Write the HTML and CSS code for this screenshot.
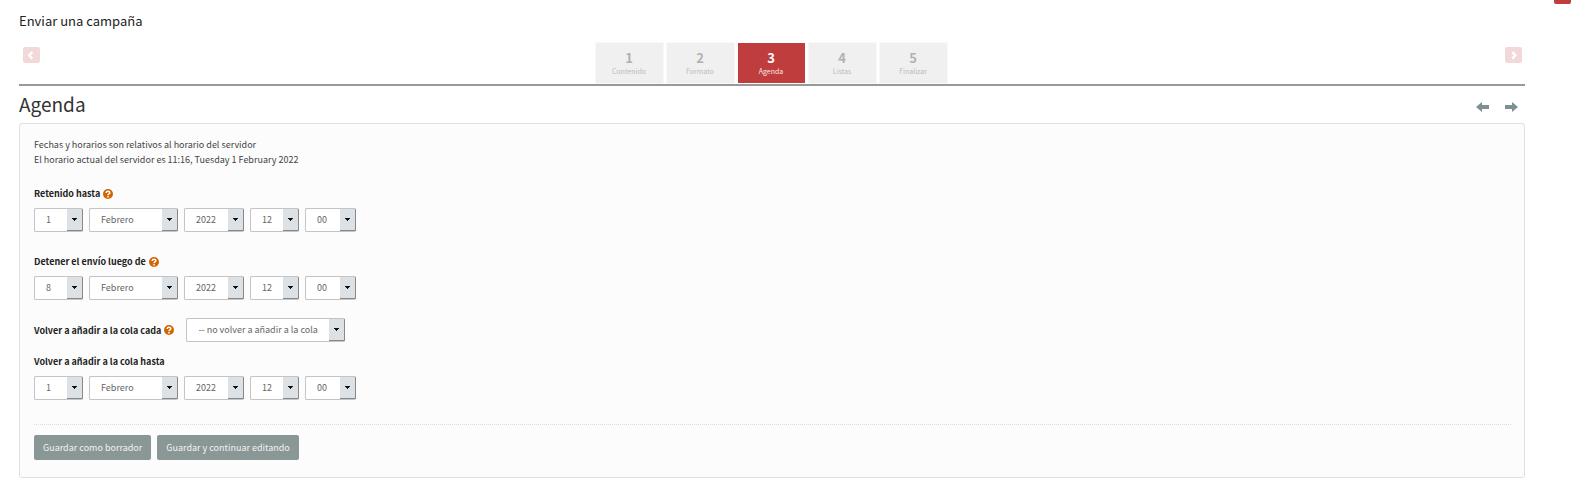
FILE: index.html
```html
<!DOCTYPE html>
<html lang="es">
<head>
<meta charset="utf-8">
<title>Enviar una campaña</title>
<link rel="stylesheet" href="styles.css">
</head>
<body>
<button class="menu-toggle" type="button" aria-label="Menu"></button>
<main class="page">
  <h1 class="page-title">Enviar una campaña</h1>
  <nav class="wizard">
    <button class="pager" type="button" aria-label="Anterior"><svg viewBox="0 0 17 16"><path d="M9.300 5 6.300 8.300l3 3.300"/></svg></button>
    <div class="tabs">
      <a class="tab" href="#1"><b>1</b><span>Contenido</span></a>
      <a class="tab" href="#2"><b>2</b><span>Formato</span></a>
      <a class="tab active" href="#3"><b>3</b><span>Agenda</span></a>
      <a class="tab" href="#4"><b>4</b><span>Listas</span></a>
      <a class="tab" href="#5"><b>5</b><span>Finalizar</span></a>
    </div>
    <button class="pager" type="button" aria-label="Siguiente"><svg viewBox="0 0 17 16"><path d="M7.300 5l3 3.300-3 3.300"/></svg></button>
  </nav>
  <header class="section-head">
    <h2>Agenda</h2>
    <div class="arrows">
      <a href="#2" aria-label="Anterior"><svg viewBox="0 0 13 10"><path d="M0 5 6 0v3h7v4H6v3z"/></svg></a>
      <a href="#4" aria-label="Siguiente"><svg viewBox="0 0 13 10"><path d="M13 5 7 0v3H0v4h7v3z"/></svg></a>
    </div>
  </header>
  <form class="panel">
    <p class="note">Fechas y horarios son relativos al horario del servidor<br>El horario actual del servidor es 11:16, Tuesday 1 February 2022</p>
    <div class="field">
      <div class="label-row"><label for="d1">Retenido hasta</label><a class="help" href="#h1" aria-label="Ayuda"><svg viewBox="0 0 10 10"><circle cx="5" cy="5" r="5"/><path d="M3.200 3.900C3.200 1.700 6.800 1.700 6.800 3.800 6.800 5 5 4.900 5 6.200M5 7.100v1.300"/></svg></a></div>
      <div class="selects">
        <select class="w-day" id="d1" aria-label="Día"><option>1</option></select>
        <select class="w-month" aria-label="Mes"><option>Febrero</option></select>
        <select class="w-year" aria-label="Año"><option>2022</option></select>
        <select class="w-day" aria-label="Hora"><option>12</option></select>
        <select class="w-min" aria-label="Minuto"><option>00</option></select>
      </div>
    </div>
    <div class="field">
      <div class="label-row"><label for="d2">Detener el envío luego de</label><a class="help" href="#h2" aria-label="Ayuda"><svg viewBox="0 0 10 10"><circle cx="5" cy="5" r="5"/><path d="M3.200 3.900C3.200 1.700 6.800 1.700 6.800 3.800 6.800 5 5 4.900 5 6.200M5 7.100v1.300"/></svg></a></div>
      <div class="selects">
        <select class="w-day" id="d2" aria-label="Día"><option>8</option></select>
        <select class="w-month" aria-label="Mes"><option>Febrero</option></select>
        <select class="w-year" aria-label="Año"><option>2022</option></select>
        <select class="w-day" aria-label="Hora"><option>12</option></select>
        <select class="w-min" aria-label="Minuto"><option>00</option></select>
      </div>
    </div>
    <div class="field-inline">
      <div class="label-row"><label for="rq">Volver a añadir a la cola cada</label><a class="help" href="#h3" aria-label="Ayuda"><svg viewBox="0 0 10 10"><circle cx="5" cy="5" r="5"/><path d="M3.200 3.900C3.200 1.700 6.800 1.700 6.800 3.800 6.800 5 5 4.900 5 6.200M5 7.100v1.300"/></svg></a></div>
      <select class="w-queue" id="rq"><option>-- no volver a añadir a la cola</option></select>
    </div>
    <div class="field-until">
      <div class="label-row"><label for="d3">Volver a añadir a la cola hasta</label></div>
      <div class="selects">
        <select class="w-day" id="d3" aria-label="Día"><option>1</option></select>
        <select class="w-month" aria-label="Mes"><option>Febrero</option></select>
        <select class="w-year" aria-label="Año"><option>2022</option></select>
        <select class="w-day" aria-label="Hora"><option>12</option></select>
        <select class="w-min" aria-label="Minuto"><option>00</option></select>
      </div>
    </div>
    <div class="actions">
      <button class="save" type="button">Guardar como borrador</button>
      <button class="save" type="button">Guardar y continuar editando</button>
    </div>
  </form>
</main>
</body>
</html>
```
FILE: styles.css
```css
* { box-sizing: border-box; }
body {
  margin: 0;
  background: #fff;
  color: #444;
  font: 9px/15px "Noto Sans CJK SC", sans-serif;
}
h1, h2, p { margin: 0; font-weight: 400; }
a { text-decoration: none; color: inherit; }
button { font: inherit; border: 0; padding: 0; }
svg { display: block; }

.menu-toggle {
  position: absolute;
  top: 0;
  right: 3px;
  width: 17px;
  height: 4px;
  background: #bf3d3d;
  border-radius: 0 0 2px 2px;
}
.page { margin: 0 49px 0 19px; padding-top: 10px; }
.page-title { font-size: 13px; line-height: 22px; color: #222; }

.wizard {
  display: flex;
  justify-content: space-between;
  margin-top: 10px;
  padding: 0 3px 0 4px;
  border-bottom: 2px solid #999;
}
.pager {
  width: 17px;
  height: 16px;
  margin-top: 5px;
  background: #f2d8d9;
  border-radius: 2px;
}
.pager path { fill: none; stroke: #fff; stroke-width: 2.4; }
.tabs { display: flex; gap: 2px; margin-right: 3px; }
.tab {
  width: 69px;
  height: 42px;
  padding-top: 8px;
  border: 1px solid #f8f8f8;
  background: #f0f0f0;
  background-clip: padding-box;
  color: #b0b0b0;
  text-align: center;
}
.tab b { display: block; font-size: 13px; line-height: 14px; }
.tab span { display: block; color: #bbb; font-size: 7px; line-height: 12px; }
.tab.active { background-color: #bf3d3d; border-color: #fff; color: #fff; }
.tab.active span { color: #fae6e6; }

.section-head {
  display: flex;
  justify-content: space-between;
  align-items: center;
  height: 37px;
  padding: 0 7px 2px 0;
}
.section-head h2 { font-size: 19px; line-height: 35px; color: #333; }
.arrows { display: flex; gap: 16px; padding-top: 6px; }
.arrows svg { width: 13px; height: 10px; fill: #7f9093; }

.panel {
  padding: 13px 13px 17px 14px;
  border: 1px solid #e0e0e0;
  border-radius: 3px;
  background: #fcfcfc;
}
.label-row { display: flex; align-items: center; gap: 3px; }
.label-row label { color: #222; font-weight: 700; }
.help svg { width: 10px; height: 10px; }
.help circle { fill: #d16600; }
.help path { fill: none; stroke: #fff; stroke-width: 1.5; }
.note { margin-bottom: 19px; }
.field { margin-bottom: 22px; }
.field + .field { margin-bottom: 18px; }
.selects { display: flex; gap: 6px; margin-top: 7px; }
select {
  appearance: none;
  height: 24px;
  padding: 0 17px 0 11px;
  border: 1px solid #c4c4c4;
  border-right-color: #888;
  border-radius: 2px;
  background:
    linear-gradient(#111, #111) right 5px top 9px / 5px 1px no-repeat,
    linear-gradient(#111, #111) right 6px top 10px / 3px 1px no-repeat,
    linear-gradient(#111, #111) right 7px top 11px / 1px 1px no-repeat,
    linear-gradient(#888, #888) right bottom / 15px 1px no-repeat,
    linear-gradient(#dce1e5, #dce1e5) right / 15px 100% no-repeat,
    #fff;
  color: #666;
  font: 9px/20px "Noto Sans CJK SC", sans-serif;
}
.w-day { width: 49px; }
.w-month { width: 89px; }
.w-year { width: 60px; }
.w-min { width: 51px; }
.w-queue { width: 159px; }
.field-inline { display: flex; align-items: center; gap: 12px; margin-bottom: 12px; }
.actions {
  display: flex;
  gap: 6px;
  margin-top: 24px;
  padding-top: 10px;
  border-top: 1px dotted #ddd;
}
.save {
  height: 25px;
  padding: 0 9px;
  border-radius: 2px;
  background: #8a9797;
  color: #f2f2f2;
}
```
